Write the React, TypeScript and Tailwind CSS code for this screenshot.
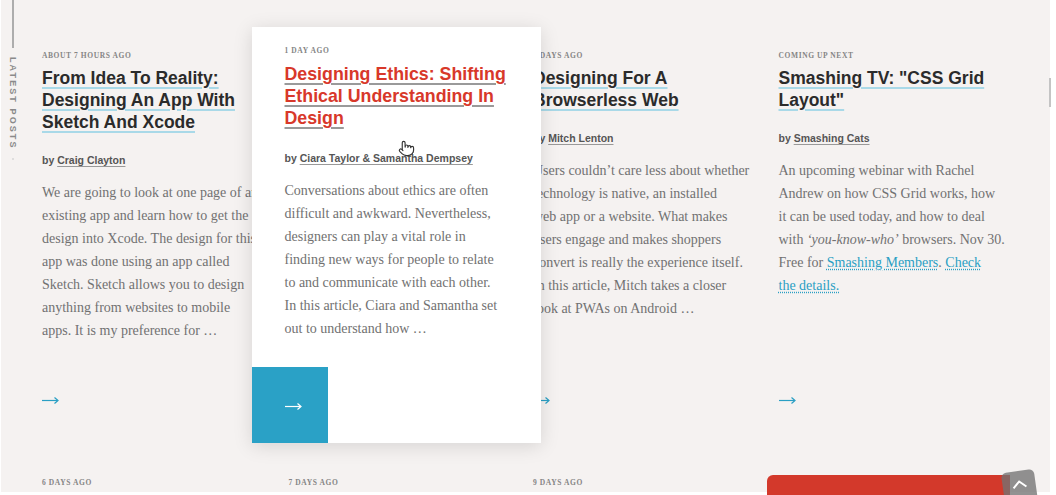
import { Pointer } from "lucide-react";

const sans = "font-['Liberation_Sans',Arial,sans-serif]";
const serif = "font-['Liberation_Serif','Times_New_Roman',serif]";

function Arrow({ color }: { color: string }) {
  return (
    <svg width="17" height="9" viewBox="0 0 17 9" fill="none" stroke={color} strokeWidth="1.2">
      <path d="M0 4.5h15.5" />
      <path d="M12.5 1.5l3.5 3-3.5 3" />
    </svg>
  );
}

function DateLine({ children }: { children: React.ReactNode }) {
  return (
    <div className={`${serif} text-[7.5px] leading-[10px] tracking-[0.6px] uppercase text-[#858585] font-semibold`}>
      {children}
    </div>
  );
}

interface Post {
  date: string;
  title: string[];
  author: string;
  body: React.ReactNode;
}

const posts: Post[] = [
  {
    date: "About 7 hours ago",
    title: ["From Idea To Reality:", "Designing An App With", "Sketch And Xcode"],
    author: "Craig Clayton",
    body: (
      <>
        We are going to look at one page of an
        <br />
        existing app and learn how to get the
        <br />
        design into Xcode. The design for this
        <br />
        app was done using an app called
        <br />
        Sketch. Sketch allows you to design
        <br />
        anything from websites to mobile
        <br />
        apps. It is my preference for …
      </>
    ),
  },
  {
    date: "1 day ago",
    title: ["Designing Ethics: Shifting", "Ethical Understanding In", "Design"],
    author: "Ciara Taylor & Samantha Dempsey",
    body: (
      <>
        Conversations about ethics are often
        <br />
        difficult and awkward. Nevertheless,
        <br />
        designers can play a vital role in
        <br />
        finding new ways for people to relate
        <br />
        to and communicate with each other.
        <br />
        In this article, Ciara and Samantha set
        <br />
        out to understand how …
      </>
    ),
  },
  {
    date: "9 days ago",
    title: ["Designing For A", "Browserless Web"],
    author: "Mitch Lenton",
    body: (
      <>
        Users couldn’t care less about whether
        <br />
        technology is native, an installed
        <br />
        web app or a website. What makes
        <br />
        users engage and makes shoppers
        <br />
        convert is really the experience itself.
        <br />
        In this article, Mitch takes a closer
        <br />
        look at PWAs on Android …
      </>
    ),
  },
  {
    date: "Coming up next",
    title: ["Smashing TV: \"CSS Grid", "Layout\""],
    author: "Smashing Cats",
    body: (
      <>
        An upcoming webinar with Rachel
        <br />
        Andrew on how CSS Grid works, how
        <br />
        it can be used today, and how to deal
        <br />
        with <em>‘you-know-who’</em> browsers. Nov 30.
        <br />
        Free for{" "}
        <a className="text-[#2a9fc4] underline decoration-dotted underline-offset-2">Smashing Members</a>.{" "}
        <a className="text-[#2a9fc4] underline decoration-dotted underline-offset-2">Check</a>
        <br />
        <a className="text-[#2a9fc4] underline decoration-dotted underline-offset-2">the details.</a>
      </>
    ),
  },
];

function PostText({ post }: { post: Post }) {
  return (
    <>
      <DateLine>{post.date}</DateLine>
      <h2
        className={`${sans} mt-[6px] text-[17.5px] leading-[22px] font-bold text-[#2b2b2b] underline decoration-[#a9d9e8] decoration-[1.5px] underline-offset-[3px]`}
      >
        {post.title.map((t, i) => (
          <span key={i} className="block whitespace-nowrap">
            {t}
          </span>
        ))}
      </h2>
      <div className={`${sans} mt-[20px] text-[10.5px] leading-[14px] font-bold text-[#555]`}>
        by <span className="underline decoration-[#999] underline-offset-2">{post.author}</span>
      </div>
      <p className={`${serif} mt-[14px] text-[14px] leading-[23px] text-[#717171] whitespace-nowrap`}>
        {post.body}
      </p>
    </>
  );
}

export default function App() {
  return (
    <div className="relative w-[1056px] h-[495px] bg-white overflow-hidden">
      <div className="ml-[1px] w-[1049px] h-[492px] bg-[#f5f2f1] flex">
        {/* sidebar */}
        <div className="w-[23px] flex flex-col items-center">
          <div className="w-[2px] h-[48px] bg-[#adadad]" />
          <div
            className={`${sans} mt-[9px] [writing-mode:vertical-rl] text-[9px] font-bold tracking-[2.1px] text-[#8a8a8a]`}
          >
            LATEST POSTS
          </div>
          <div className="mt-[8px] w-[2px] h-[2px] rounded-full bg-[#d6d6d6]" />
        </div>

        {/* posts */}
        <div className="pl-[18px] pt-[51px]">
          <div className="grid grid-cols-[222px_222px_222px_222px] gap-x-[23.5px] gap-y-[34px]">
            <div className="h-[356px] flex flex-col">
              <PostText post={posts[0]} />
              <div className="mt-auto h-[14px] flex items-center">
                <Arrow color="#2a9fc4" />
              </div>
            </div>

            <div className="relative z-10 -ml-[36px] -mt-[24px] w-[289px] h-[416px] bg-white shadow-[0_3px_18px_rgba(0,0,0,0.13)] flex flex-col">
              <div className="pl-[33px] pt-[19px]">
                <DateLine>{posts[1].date}</DateLine>
                <h2
                  className={`${sans} mt-[7px] text-[17.8px] leading-[22px] font-bold text-[#d8382a] underline decoration-[#9a9a9a] decoration-[1.5px] underline-offset-[3px]`}
                >
                  {posts[1].title.map((t, i) => (
                    <span key={i} className="block whitespace-nowrap">
                      {t}
                    </span>
                  ))}
                </h2>
                <div className={`${sans} mt-[22px] text-[10.5px] leading-[14px] font-bold text-[#555]`}>
                  by{" "}
                  <span className="underline decoration-[#999] underline-offset-2">{posts[1].author}</span>
                </div>
                <p className={`${serif} mt-[14px] text-[14px] leading-[23px] text-[#717171] whitespace-nowrap`}>
                  {posts[1].body}
                </p>
              </div>
              <div className="mt-auto w-[76px] h-[76px] bg-[#2aa1c6] flex items-center justify-center pl-[8px] pt-[2px]">
                <Arrow color="#ffffff" />
              </div>
            </div>

            <div className="h-[356px] flex flex-col">
              <PostText post={posts[2]} />
              <div className="mt-auto h-[14px] flex items-center">
                <Arrow color="#2a9fc4" />
              </div>
            </div>

            <div className="h-[356px] flex flex-col">
              <PostText post={posts[3]} />
              <div className="mt-auto h-[14px] flex items-center">
                <Arrow color="#2a9fc4" />
              </div>
            </div>

            <div className="pt-[1px]">
              <DateLine>6 days ago</DateLine>
            </div>
            <div className="pt-[1px] pl-[1px]">
              <DateLine>7 days ago</DateLine>
            </div>
            <div className="pt-[1px]">
              <DateLine>9 days ago</DateLine>
            </div>
            <div className="-ml-[12px] -mt-[2px] w-[243px] h-[24px] bg-[#d3392b] rounded-tl-[6px]" />
          </div>
        </div>
      </div>

      {/* scroll thumb */}
      <div className="absolute left-[1049px] top-[78px] w-[2px] h-[29px] bg-[#c4c4c4]" />

      {/* back to top */}
      <div className="absolute z-20 left-[1003px] top-[471px] w-[33px] h-[33px] rounded-[5px] bg-[rgba(115,115,115,0.78)] -rotate-[8deg] flex items-start justify-center pt-[8px]">
        <svg width="16" height="10" viewBox="0 0 16 10" fill="none" stroke="#ffffff" strokeWidth="2">
          <path d="M1.5 8.5L8 2.5l6.5 6" />
        </svg>
      </div>

      {/* cursor */}
      <div className="absolute z-20 left-[398px] top-[140px]">
        <Pointer size={17} strokeWidth={1.6} color="#333" fill="#ffffff" />
      </div>
    </div>
  );
}
